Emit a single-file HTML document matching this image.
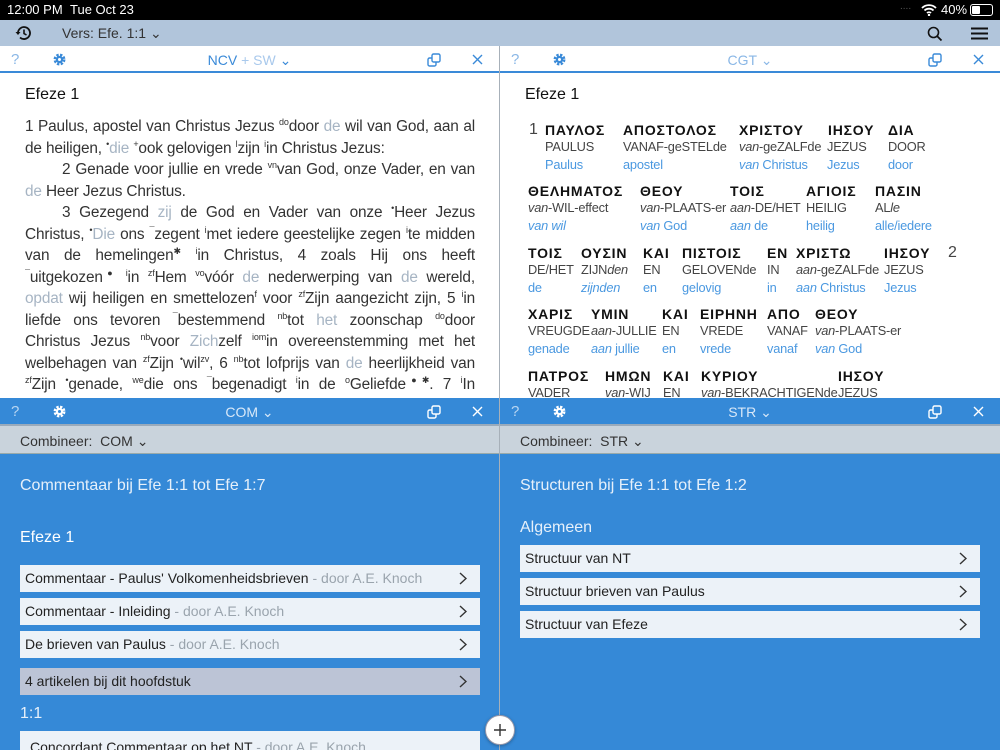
<!DOCTYPE html>
<html><head><meta charset="utf-8">
<style>
*{margin:0;padding:0;box-sizing:border-box}
body{width:1000px;height:750px;overflow:hidden;font-family:"Liberation Sans",sans-serif;background:#fff;position:relative;color:#222}
.abs{position:absolute}
#status{left:0;top:0;width:1000px;height:20px;background:#000;color:#fff;font-size:13px}
#tool{left:0;top:20px;width:1000px;height:26px;background:#b1c5db}
.hdr{height:26px;}
.hdr .q{position:absolute;left:11px;top:5px;font-size:15px}
.hdr .t{position:absolute;left:0;right:0;top:6px;text-align:center;font-size:14px}
.white{background:#fff;border-bottom:2px solid #3a8ad8;color:#3a8ad8}
.white .q{color:#8ab7e6}
.blue{background:#3589d7;color:#fff}
.blue .q{color:#b9d6f2}
.blue .t{color:#d8e8f8}
.x{position:absolute;top:8px}
.comb{height:30px;background:#c9d3dc;border-bottom:1px solid #9aa;font-size:14px;color:#333;padding:7px 0 0 20px}
.txt{position:absolute;left:25px;width:450px;font-size:15.4px;letter-spacing:-0.15px;line-height:21.5px;color:#333}
.txt div{text-align:justify;text-align-last:justify;white-space:nowrap;height:21.5px}
.txt div.l{text-align-last:left}
.txt div.i{padding-left:37px}
.txt .g{color:#a6b4c3}
.txt sup{font-size:9px;line-height:0}
.gr{position:absolute;font-size:14px;font-weight:bold;letter-spacing:0.8px;color:#111;white-space:nowrap}
.tr{position:absolute;font-size:12.8px;letter-spacing:-0.2px;color:#444;white-space:nowrap}
.bl{position:absolute;font-size:12.8px;letter-spacing:-0.2px;color:#4a98e0;white-space:nowrap}
.item{position:absolute;height:27px;background:#ecf2f8;font-size:14px;color:#222;padding:5px 0 0 5px;white-space:nowrap}
.item .a{color:#9aa4ad}
.item svg{position:absolute;right:13px;top:7px}
.wh{position:absolute;color:#e6f0fa}
</style></head><body>
<div id="status" class="abs"><span class="abs" style="left:7px;top:2px">12:00 PM</span><span class="abs" style="left:70px;top:2px">Tue Oct 23</span>
<span class="abs" style="left:900px;top:1px;color:#555;font-size:10px">....</span>
<svg class="abs" style="left:921px;top:4px" width="16" height="12" viewBox="0 0 16 12"><path d="M1 4a10 10 0 0 1 14 0M3.5 6.5a6.5 6.5 0 0 1 9 0M6 9a3 3 0 0 1 4 0" stroke="#fff" stroke-width="1.8" fill="none"/><circle cx="8" cy="11" r="1.2" fill="#fff"/></svg>
<span class="abs" style="left:941px;top:2px">40%</span>
<div class="abs" style="left:970px;top:4px;width:23px;height:12px;border:1px solid #fff;border-radius:3px"><div style="margin:1px;width:8px;height:8px;background:#fff;border-radius:1px"></div></div></div>
<div id="tool" class="abs">
<svg class="abs" style="left:15px;top:5px" width="17" height="16" viewBox="0 0 17 16"><path d="M3 8a6 6 0 1 1 2 4.5" stroke="#111" stroke-width="1.8" fill="none"/><path d="M0.5 7l2.5 3 2.5-3z" fill="#111"/><path d="M9 4.5V8.5l2.5 1.5" stroke="#111" stroke-width="1.6" fill="none"/></svg>
<span class="abs" style="left:62px;top:5px;font-size:14px;color:#333">Vers: Efe. 1:1 ⌄</span>
<svg class="abs" style="left:927px;top:6px" width="16" height="16" viewBox="0 0 16 16"><circle cx="6.5" cy="6.5" r="5" stroke="#111" stroke-width="1.6" fill="none"/><path d="M10 10l4.5 4.5" stroke="#111" stroke-width="1.8"/></svg>
<svg class="abs" style="left:971px;top:7px" width="17" height="13" viewBox="0 0 17 13"><path d="M0 1.5h17M0 6.5h17M0 11.5h17" stroke="#111" stroke-width="2"/></svg>
</div>

<div class="abs hdr white" style="left:0;top:46px;width:499px;height:27px"><span class="q">?</span>
<svg class="abs" style="left:53px;top:7px" width="13" height="13" viewBox="0 0 12 12"><circle cx="6" cy="6" r="4" fill="none" stroke="#3a8ad8" stroke-width="3" stroke-dasharray="2 1.2"/><circle cx="6" cy="6" r="3.4" fill="#3a8ad8"/><circle cx="6" cy="6" r="1.4" fill="#fff"/></svg>
<span class="t">NCV <span style="color:#a9c9ec">+ SW</span> ⌄</span>
<svg class="abs" style="left:427px;top:7px" width="14" height="14" viewBox="0 0 14 14"><rect x="1" y="5" width="8" height="8" rx="1.5" fill="none" stroke="#3a8ad8" stroke-width="1.4"/><rect x="5" y="1" width="8" height="8" rx="1.5" fill="#fff" stroke="#3a8ad8" stroke-width="1.4"/></svg>
<svg class="x" style="left:472px" width="11" height="11" viewBox="0 0 11 11"><path d="M1 1l9 9M10 1l-9 9" stroke="#3a8ad8" stroke-width="1.4"/></svg></div>
<div class="abs hdr white" style="left:500px;top:46px;width:500px;height:27px"><span class="q">?</span>
<svg class="abs" style="left:53px;top:7px" width="13" height="13" viewBox="0 0 12 12"><circle cx="6" cy="6" r="4" fill="none" stroke="#3a8ad8" stroke-width="3" stroke-dasharray="2 1.2"/><circle cx="6" cy="6" r="3.4" fill="#3a8ad8"/><circle cx="6" cy="6" r="1.4" fill="#fff"/></svg>
<span class="t" style="color:#8ab7e6">CGT ⌄</span>
<svg class="abs" style="left:428px;top:7px" width="14" height="14" viewBox="0 0 14 14"><rect x="1" y="5" width="8" height="8" rx="1.5" fill="none" stroke="#3a8ad8" stroke-width="1.4"/><rect x="5" y="1" width="8" height="8" rx="1.5" fill="#fff" stroke="#3a8ad8" stroke-width="1.4"/></svg>
<svg class="x" style="left:473px" width="11" height="11" viewBox="0 0 11 11"><path d="M1 1l9 9M10 1l-9 9" stroke="#3a8ad8" stroke-width="1.4"/></svg></div>

<div class="abs" style="left:499px;top:46px;width:1px;height:704px;background:#a7b0b9"></div>

<div class="abs" style="left:25px;top:86px;font-size:16px;color:#111">Efeze 1</div>
<div class="txt" style="top:116px;height:282px;overflow:hidden">
<div>1 Paulus, apostel van Christus Jezus <sup>do</sup>door <span class="g">de</span> wil van God, aan al</div>
<div class="l">de heiligen, <sup>•</sup><span class="g">die</span> <sup>+</sup>ook gelovigen <sup>l</sup>zijn <sup>i</sup>in Christus Jezus:</div>
<div class="i">2 Genade voor jullie en vrede <sup>vn</sup>van God, onze Vader, en van</div>
<div class="l"><span class="g">de</span> Heer Jezus Christus.</div>
<div class="i">3 Gezegend <span class="g">zij</span> de God en Vader van onze <sup>•</sup>Heer Jezus</div>
<div>Christus, <sup>•</sup><span class="g">Die</span> ons <sup>¯</sup>zegent <sup>i</sup>met iedere geestelijke zegen <sup>i</sup>te midden</div>
<div>van de hemelingen<sup>✱</sup> <sup>i</sup>in Christus, 4 zoals Hij ons heeft</div>
<div><sup>¯</sup>uitgekozen<sup>●</sup> <sup>i</sup>in <sup>zf</sup>Hem <sup>vo</sup>vóór <span class="g">de</span> nederwerping van <span class="g">de</span> wereld,</div>
<div><span class="g">opdat</span> wij heiligen en smettelozen<sup>f</sup> voor <sup>zf</sup>Zijn aangezicht zijn, 5 <sup>i</sup>in</div>
<div>liefde ons tevoren <sup>¯</sup>bestemmend <sup>nb</sup>tot <span class="g">het</span> zoonschap <sup>do</sup>door</div>
<div>Christus Jezus <sup>nb</sup>voor <span class="g">Zich</span>zelf <sup>iom</sup>in overeenstemming met het</div>
<div>welbehagen van <sup>zf</sup>Zijn <sup>•</sup>wil<sup>zv</sup>, 6 <sup>nb</sup>tot lofprijs van <span class="g">de</span> heerlijkheid van</div>
<div><sup>zf</sup>Zijn <sup>•</sup>genade, <sup>we</sup>die ons <sup>¯</sup>begenadigt <sup>i</sup>in de <sup>o</sup>Geliefde<sup>●✱</sup>. 7 <sup>i</sup>In</div>
<div><sup>we</sup>wie we hebben de verlossing <sup>do</sup>door <sup>zf</sup>Zijn bloed, de</div>
</div>

<div class="abs" style="left:525px;top:86px;font-size:16px;color:#111">Efeze 1</div>
<div class="abs" style="left:500px;top:115px;width:499px;height:283px;overflow:hidden">
<span class="abs" style="left:29px;top:6px;font-size:16px;color:#444">1</span>
<span class="gr" style="left:45px;top:7px">ΠΑΥΛΟΣ</span><span class="gr" style="left:123px;top:7px">ΑΠΟΣΤΟΛΟΣ</span><span class="gr" style="left:239px;top:7px">ΧΡΙΣΤΟΥ</span><span class="gr" style="left:328px;top:7px">ΙΗΣΟΥ</span><span class="gr" style="left:388px;top:7px">ΔΙΑ</span>
<span class="tr" style="left:45px;top:24px">PAULUS</span><span class="tr" style="left:123px;top:24px">VANAF-geSTELde</span><span class="tr" style="left:239px;top:24px"><i>van</i>-geZALFde</span><span class="tr" style="left:327px;top:24px">JEZUS</span><span class="tr" style="left:388px;top:24px">DOOR</span>
<span class="bl" style="left:45px;top:42px">Paulus</span><span class="bl" style="left:123px;top:42px">apostel</span><span class="bl" style="left:239px;top:42px"><i>van</i> Christus</span><span class="bl" style="left:327px;top:42px">Jezus</span><span class="bl" style="left:388px;top:42px">door</span>

<span class="gr" style="left:28px;top:68px">ΘΕΛΗΜΑΤΟΣ</span><span class="gr" style="left:140px;top:68px">ΘΕΟΥ</span><span class="gr" style="left:230px;top:68px">ΤΟΙΣ</span><span class="gr" style="left:306px;top:68px">ΑΓΙΟΙΣ</span><span class="gr" style="left:375px;top:68px">ΠΑΣΙΝ</span>
<span class="tr" style="left:28px;top:85px"><i>van</i>-WIL-effect</span><span class="tr" style="left:140px;top:85px"><i>van</i>-PLAATS-er</span><span class="tr" style="left:230px;top:85px"><i>aan</i>-DE/HET</span><span class="tr" style="left:306px;top:85px">HEILIG</span><span class="tr" style="left:375px;top:85px">AL<i>le</i></span>
<span class="bl" style="left:28px;top:103px"><i>van wil</i></span><span class="bl" style="left:140px;top:103px"><i>van</i> God</span><span class="bl" style="left:230px;top:103px"><i>aan</i> de</span><span class="bl" style="left:306px;top:103px">heilig</span><span class="bl" style="left:375px;top:103px">alle/iedere</span>

<span class="gr" style="left:28px;top:130px">ΤΟΙΣ</span><span class="gr" style="left:81px;top:130px">ΟΥΣΙΝ</span><span class="gr" style="left:143px;top:130px">ΚΑΙ</span><span class="gr" style="left:182px;top:130px">ΠΙΣΤΟΙΣ</span><span class="gr" style="left:267px;top:130px">ΕΝ</span><span class="gr" style="left:296px;top:130px">ΧΡΙΣΤΩ</span><span class="gr" style="left:384px;top:130px">ΙΗΣΟΥ</span><span class="abs" style="left:448px;top:129px;font-size:16px;color:#444">2</span>
<span class="tr" style="left:28px;top:147px">DE/HET</span><span class="tr" style="left:81px;top:147px">ZIJN<i>den</i></span><span class="tr" style="left:143px;top:147px">EN</span><span class="tr" style="left:182px;top:147px">GELOVENde</span><span class="tr" style="left:267px;top:147px">IN</span><span class="tr" style="left:296px;top:147px"><i>aan</i>-geZALFde</span><span class="tr" style="left:384px;top:147px">JEZUS</span>
<span class="bl" style="left:28px;top:165px">de</span><span class="bl" style="left:81px;top:165px"><i>zijnden</i></span><span class="bl" style="left:143px;top:165px">en</span><span class="bl" style="left:182px;top:165px">gelovig</span><span class="bl" style="left:267px;top:165px">in</span><span class="bl" style="left:296px;top:165px"><i>aan</i> Christus</span><span class="bl" style="left:384px;top:165px">Jezus</span>

<span class="gr" style="left:28px;top:191px">ΧΑΡΙΣ</span><span class="gr" style="left:91px;top:191px">ΥΜΙΝ</span><span class="gr" style="left:162px;top:191px">ΚΑΙ</span><span class="gr" style="left:200px;top:191px">ΕΙΡΗΝΗ</span><span class="gr" style="left:267px;top:191px">ΑΠΟ</span><span class="gr" style="left:315px;top:191px">ΘΕΟΥ</span>
<span class="tr" style="left:28px;top:208px">VREUGDE</span><span class="tr" style="left:91px;top:208px"><i>aan</i>-JULLIE</span><span class="tr" style="left:162px;top:208px">EN</span><span class="tr" style="left:200px;top:208px">VREDE</span><span class="tr" style="left:267px;top:208px">VANAF</span><span class="tr" style="left:315px;top:208px"><i>van</i>-PLAATS-er</span>
<span class="bl" style="left:28px;top:226px">genade</span><span class="bl" style="left:91px;top:226px"><i>aan</i> jullie</span><span class="bl" style="left:162px;top:226px">en</span><span class="bl" style="left:200px;top:226px">vrede</span><span class="bl" style="left:267px;top:226px">vanaf</span><span class="bl" style="left:315px;top:226px"><i>van</i> God</span>

<span class="gr" style="left:28px;top:253px">ΠΑΤΡΟΣ</span><span class="gr" style="left:105px;top:253px">ΗΜΩΝ</span><span class="gr" style="left:163px;top:253px">ΚΑΙ</span><span class="gr" style="left:201px;top:253px">ΚΥΡΙΟΥ</span><span class="gr" style="left:338px;top:253px">ΙΗΣΟΥ</span>
<span class="tr" style="left:28px;top:270px">VADER</span><span class="tr" style="left:105px;top:270px"><i>van</i>-WIJ</span><span class="tr" style="left:163px;top:270px">EN</span><span class="tr" style="left:201px;top:270px"><i>van</i>-BEKRACHTIGENde</span><span class="tr" style="left:338px;top:270px">JEZUS</span>
</div>

<div class="abs" style="left:0;top:398px;width:499px;height:352px;background:#3589d7;overflow:hidden">
<div class="hdr blue" style="position:relative"><span class="q">?</span>
<svg class="abs" style="left:53px;top:7px" width="13" height="13" viewBox="0 0 12 12"><circle cx="6" cy="6" r="4" fill="none" stroke="#fff" stroke-width="3" stroke-dasharray="2 1.2"/><circle cx="6" cy="6" r="3.4" fill="#fff"/><circle cx="6" cy="6" r="1.4" fill="#3589d7"/></svg>
<span class="t">COM ⌄</span>
<svg class="abs" style="left:427px;top:7px" width="14" height="14" viewBox="0 0 14 14"><rect x="1" y="5" width="8" height="8" rx="1.5" fill="none" stroke="#fff" stroke-width="1.4"/><rect x="5" y="1" width="8" height="8" rx="1.5" fill="#3589d7" stroke="#fff" stroke-width="1.4"/></svg>
<svg class="x" style="left:472px" width="11" height="11" viewBox="0 0 11 11"><path d="M1 1l9 9M10 1l-9 9" stroke="#fff" stroke-width="1.4"/></svg></div>
<div class="comb" style="border-top:2px solid #9ab">Combineer:&nbsp; COM ⌄</div>
<span class="wh" style="left:20px;top:79px;font-size:16px">Commentaar bij Efe 1:1 tot Efe 1:7</span>
<span class="wh" style="left:20px;top:131px;font-size:16px;color:#fff">Efeze 1</span>
<div class="item" style="left:20px;top:167px;width:460px">Commentaar - Paulus' Volkomenheidsbrieven <span class="a">- door A.E. Knoch</span><svg width="8" height="13" viewBox="0 0 8 13"><path d="M1 1l6 5.5-6 5.5" stroke="#333" stroke-width="1.4" fill="none"/></svg></div>
<div class="item" style="left:20px;top:200px;width:460px">Commentaar - Inleiding <span class="a">- door A.E. Knoch</span><svg width="8" height="13" viewBox="0 0 8 13"><path d="M1 1l6 5.5-6 5.5" stroke="#333" stroke-width="1.4" fill="none"/></svg></div>
<div class="item" style="left:20px;top:233px;width:460px">De brieven van Paulus <span class="a">- door A.E. Knoch</span><svg width="8" height="13" viewBox="0 0 8 13"><path d="M1 1l6 5.5-6 5.5" stroke="#333" stroke-width="1.4" fill="none"/></svg></div>
<div class="item" style="left:20px;top:270px;width:460px;background:#bcc4d6">4 artikelen bij dit hoofdstuk<svg width="8" height="13" viewBox="0 0 8 13"><path d="M1 1l6 5.5-6 5.5" stroke="#333" stroke-width="1.4" fill="none"/></svg></div>
<span class="wh" style="left:20px;top:307px;font-size:16px">1:1</span>
<div class="item" style="left:20px;top:333px;width:460px;height:40px;padding:8px 0 0 10px">Concordant Commentaar op het NT <span class="a">- door A.E. Knoch</span></div>
</div>
<div class="abs" style="left:500px;top:398px;width:500px;height:352px;background:#3589d7;overflow:hidden">
<div class="hdr blue" style="position:relative"><span class="q">?</span>
<svg class="abs" style="left:53px;top:7px" width="13" height="13" viewBox="0 0 12 12"><circle cx="6" cy="6" r="4" fill="none" stroke="#fff" stroke-width="3" stroke-dasharray="2 1.2"/><circle cx="6" cy="6" r="3.4" fill="#fff"/><circle cx="6" cy="6" r="1.4" fill="#3589d7"/></svg>
<span class="t">STR ⌄</span>
<svg class="abs" style="left:428px;top:7px" width="14" height="14" viewBox="0 0 14 14"><rect x="1" y="5" width="8" height="8" rx="1.5" fill="none" stroke="#fff" stroke-width="1.4"/><rect x="5" y="1" width="8" height="8" rx="1.5" fill="#3589d7" stroke="#fff" stroke-width="1.4"/></svg>
<svg class="x" style="left:473px" width="11" height="11" viewBox="0 0 11 11"><path d="M1 1l9 9M10 1l-9 9" stroke="#fff" stroke-width="1.4"/></svg></div>
<div class="comb" style="border-top:2px solid #9ab">Combineer:&nbsp; STR ⌄</div>
<span class="wh" style="left:20px;top:79px;font-size:16px">Structuren bij Efe 1:1 tot Efe 1:2</span>
<span class="wh" style="left:20px;top:121px;font-size:16px">Algemeen</span>
<div class="item" style="left:20px;top:147px;width:460px">Structuur van NT<svg width="8" height="13" viewBox="0 0 8 13"><path d="M1 1l6 5.5-6 5.5" stroke="#333" stroke-width="1.4" fill="none"/></svg></div>
<div class="item" style="left:20px;top:180px;width:460px">Structuur brieven van Paulus<svg width="8" height="13" viewBox="0 0 8 13"><path d="M1 1l6 5.5-6 5.5" stroke="#333" stroke-width="1.4" fill="none"/></svg></div>
<div class="item" style="left:20px;top:213px;width:460px">Structuur van Efeze<svg width="8" height="13" viewBox="0 0 8 13"><path d="M1 1l6 5.5-6 5.5" stroke="#333" stroke-width="1.4" fill="none"/></svg></div>
</div>
<div class="abs" style="left:485px;top:715px;width:30px;height:30px;border-radius:50%;background:#fff;border:1px solid #99a;box-shadow:0 1px 3px rgba(0,0,0,.3)"><svg class="abs" style="left:7px;top:7px" width="14" height="14" viewBox="0 0 14 14"><path d="M7 1v12M1 7h12" stroke="#333" stroke-width="1.4"/></svg></div>
</body></html>
